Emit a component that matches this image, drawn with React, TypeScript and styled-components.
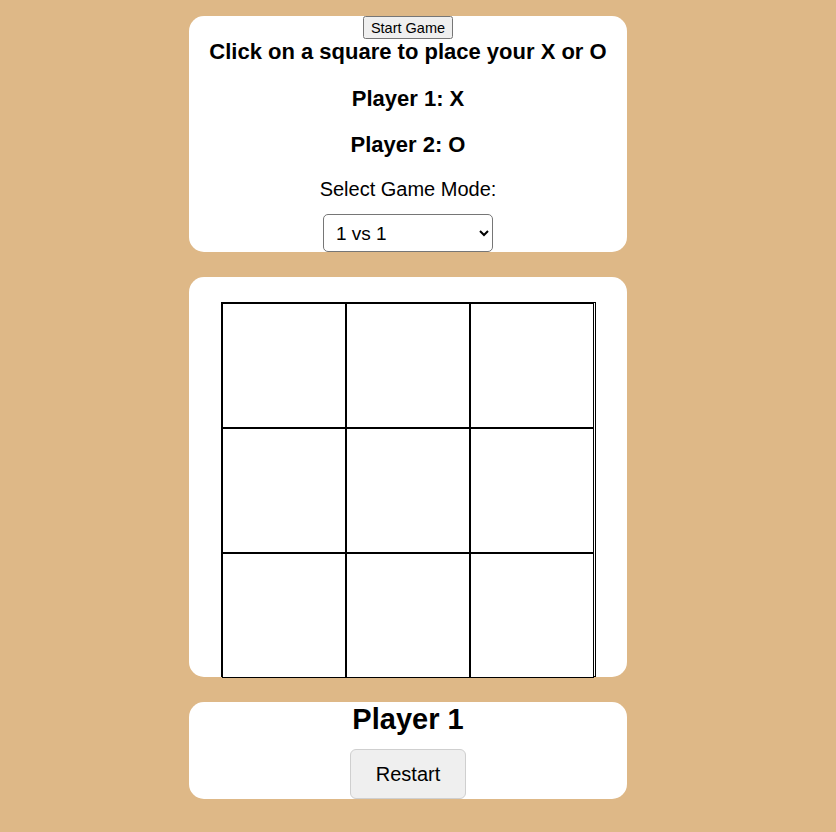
import React, { useState } from "react";
import styled, { createGlobalStyle } from "styled-components";

const GlobalStyle = createGlobalStyle`
  html, body {
    margin: 0;
    padding: 0;
    background: #deb887;
    font-family: "Liberation Sans", Arial, sans-serif;
    color: #000;
  }
`;

const Page = styled.div`
  display: flex;
  flex-direction: column;
  align-items: center;
  gap: 25px;
  padding: 16px 20px 33px 0;
  min-height: 832px;
  box-sizing: border-box;
`;

const Card = styled.section`
  width: 438px;
  background: #fff;
  border-radius: 15px;
  display: flex;
  flex-direction: column;
  align-items: center;
  box-sizing: border-box;
`;

const StartButton = styled.button`
  font: 14.5px "Liberation Sans", Arial, sans-serif;
  height: 23px;
  padding: 0 6px;
  margin: 0;
`;

const Heading = styled.h3<{ $top: number }>`
  font-size: 22px;
  line-height: 26px;
  font-weight: bold;
  margin: ${(p) => p.$top}px 0 0;
`;

const Label = styled.label`
  font-size: 20px;
  line-height: 23px;
  margin-top: 20px;
`;

const Select = styled.select`
  margin-top: 13px;
  width: 170px;
  height: 38px;
  font: 19px "Liberation Sans", Arial, sans-serif;
  padding: 0 8px;
  border: 1px solid #767676;
  border-radius: 5px;
  background: #fff;
  color: #000;
`;

const BoardCard = styled(Card)`
  height: 400px;
  padding: 25px 0 0 32px;
  align-items: flex-start;
`;

const Board = styled.div`
  width: 375px;
  height: 375px;
  box-sizing: border-box;
  border: 1px solid #000;
  display: grid;
  grid-template-columns: repeat(3, 124px);
  grid-template-rows: repeat(3, 125px);
`;

const Cell = styled.div`
  box-sizing: border-box;
  border: 1px solid #000;
  background: #fff;
  display: flex;
  align-items: center;
  justify-content: center;
  font-size: 60px;
  font-weight: bold;
  cursor: pointer;
`;

const Status = styled.h2`
  font-size: 29px;
  line-height: 34px;
  font-weight: bold;
  margin: 0;
`;

const RestartButton = styled.button`
  margin-top: 13px;
  width: 116px;
  height: 50px;
  font: 20px "Liberation Sans", Arial, sans-serif;
  color: #000;
  background: #efefef;
  border: 1px solid #cfcfcf;
  border-radius: 6px;
  cursor: pointer;
`;

export default function App() {
  const [cells, setCells] = useState<string[]>(Array(9).fill(""));
  const [turn, setTurn] = useState<"X" | "O">("X");

  const play = (i: number) => {
    if (cells[i]) return;
    const next = cells.slice();
    next[i] = turn;
    setCells(next);
    setTurn(turn === "X" ? "O" : "X");
  };

  return (
    <>
      <GlobalStyle />
      <Page>
        <Card>
          <StartButton>Start Game</StartButton>
          <Heading $top={0}>Click on a square to place your X or O</Heading>
          <Heading $top={21}>Player 1: X</Heading>
          <Heading $top={20}>Player 2: O</Heading>
          <Label htmlFor="mode">Select Game Mode:</Label>
          <Select id="mode" defaultValue="1v1">
            <option value="1v1">1 vs 1</option>
            <option value="cpu">1 vs CPU</option>
          </Select>
        </Card>
        <BoardCard>
          <Board>
            {cells.map((c, i) => (
              <Cell key={i} onClick={() => play(i)}>
                {c}
              </Cell>
            ))}
          </Board>
        </BoardCard>
        <Card>
          <Status>{turn === "X" ? "Player 1" : "Player 2"}</Status>
          <RestartButton
            onClick={() => {
              setCells(Array(9).fill(""));
              setTurn("X");
            }}
          >
            Restart
          </RestartButton>
        </Card>
      </Page>
    </>
  );
}
